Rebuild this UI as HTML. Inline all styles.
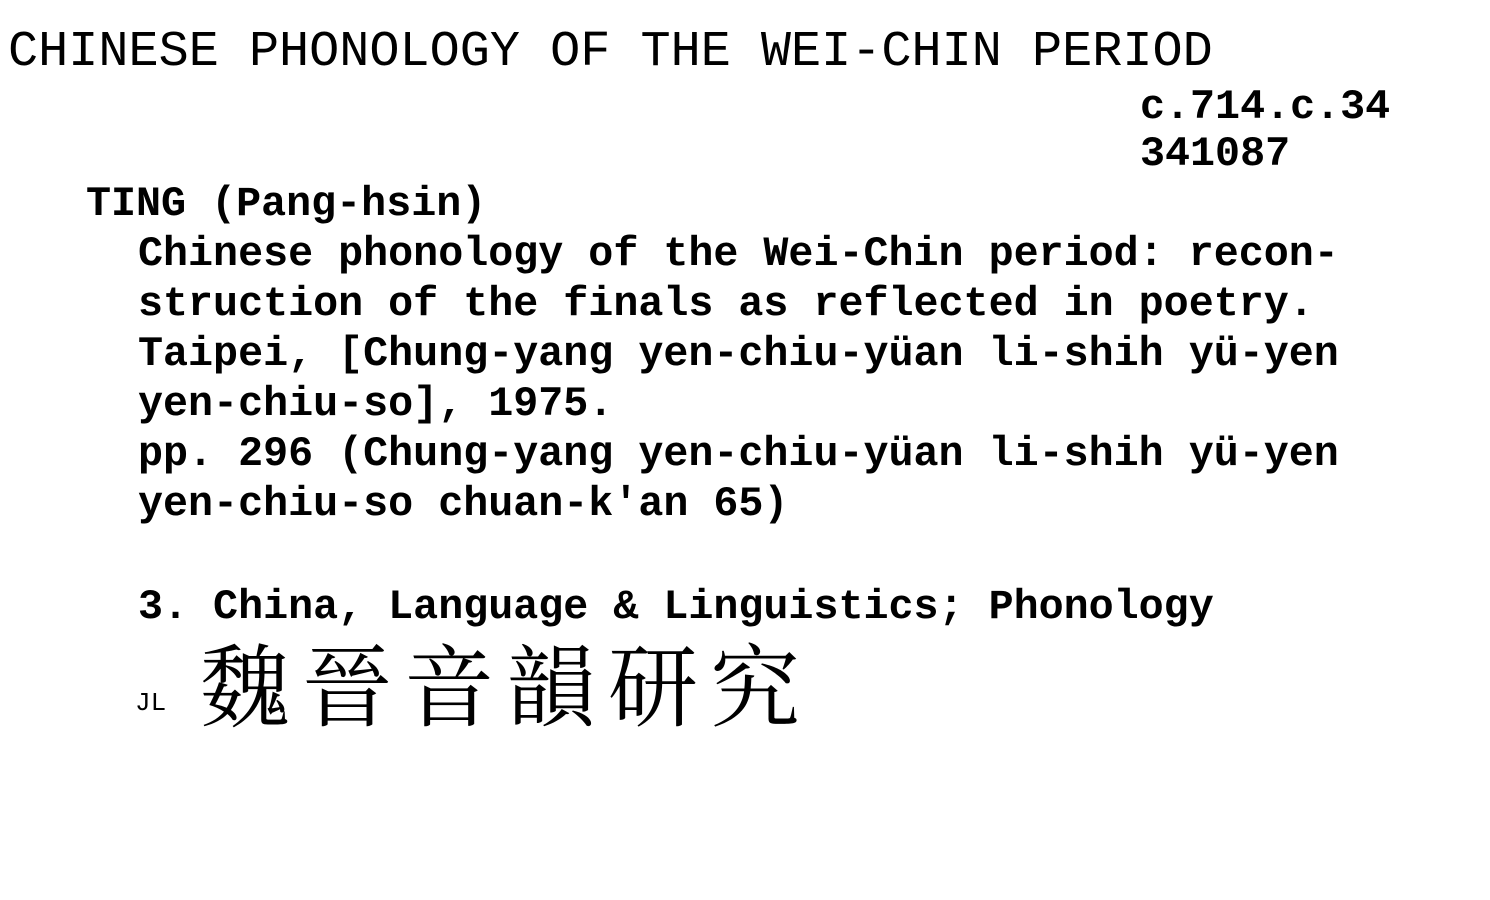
<!DOCTYPE html>
<html><head><meta charset="utf-8"><style>
html,body{margin:0;padding:0;background:#fff;width:1490px;height:900px;overflow:hidden}
.t{position:absolute;white-space:pre;font-family:"Liberation Mono",monospace;color:#000;}
.b{font-size:41.7px;line-height:50px;font-weight:bold;}
</style></head><body>
<div class="t" style="left:8px;top:28px;font-size:50.2px;line-height:50px;">CHINESE PHONOLOGY OF THE WEI-CHIN PERIOD</div>
<div class="t b" style="left:1140px;top:82px;">c.714.c.34</div>
<div class="t b" style="left:1140px;top:129px;">341087</div>
<div class="t b" style="left:86px;top:179px;">TING (Pang-hsin)</div>
<div class="t b" style="left:138px;top:229px;">Chinese phonology of the Wei-Chin period: recon-
struction of the finals as reflected in poetry.
Taipei, [Chung-yang yen-chiu-yüan li-shih yü-yen
yen-chiu-so], 1975.
pp. 296 (Chung-yang yen-chiu-yüan li-shih yü-yen
yen-chiu-so chuan-k'an 65)</div>
<div class="t b" style="left:138px;top:582px;">3. China, Language &amp; Linguistics; Phonology</div>
<div class="t" style="left:135px;top:688px;font-size:26px;line-height:30px;">JL</div>
<div class="t" style="left:200px;top:630px;font-family:'Noto Serif CJK SC','WenQuanYi Zen Hei',serif;font-size:90px;line-height:100px;letter-spacing:12px;">魏晉音韻研究</div>
</body></html>
